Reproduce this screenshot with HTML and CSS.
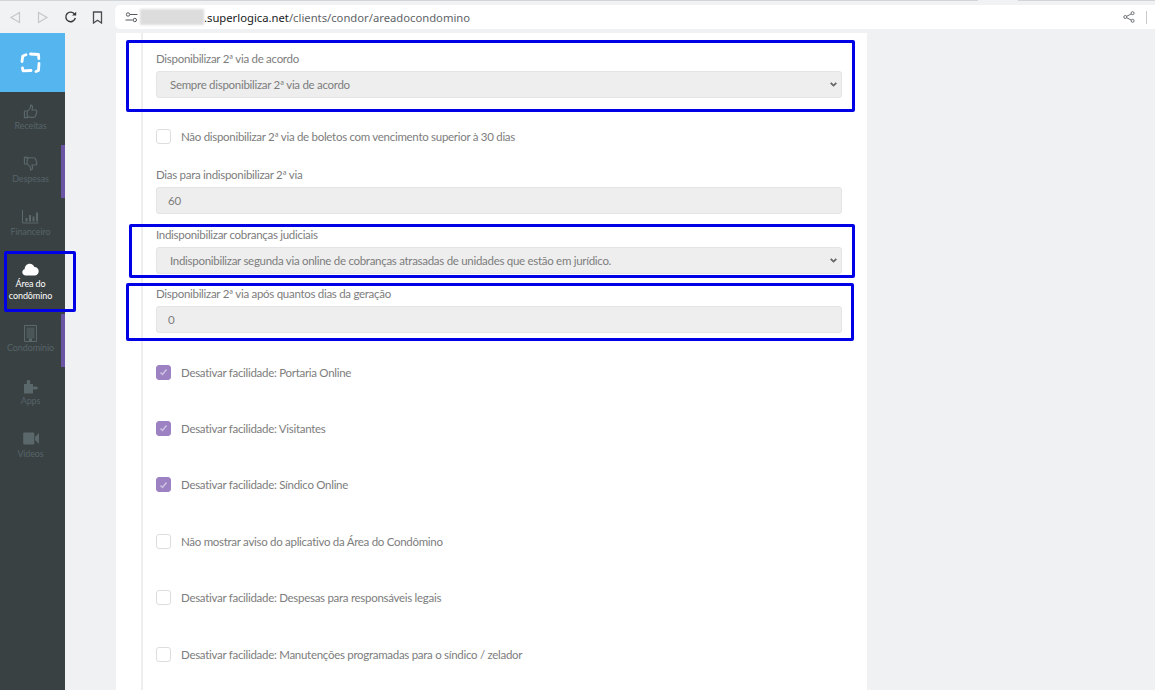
FILE: index.html
```html
<!DOCTYPE html>
<html>
<head>
    <title>Área do condômino</title>
    <link rel="stylesheet" href="styles.css">
</head>
<body>
    <div class="tabs">
        <span class="tab-line grow"></span>
        <span class="tab-gap"></span>
        <span class="tab-line end"></span>
    </div>

    <div class="toolbar">
        <div class="nav-btns">
            <svg class="nav-icon" width="12" height="13" viewBox="0 0 12 13"><path d="M10.5 1.5v10L2 6.5z" fill="none" stroke="#c4c7ca" stroke-width="1.2"/></svg>
            <svg class="nav-icon fwd" width="12" height="13" viewBox="0 0 12 13"><path d="M1.5 1.5v10L10 6.5z" fill="none" stroke="#c4c7ca" stroke-width="1.2"/></svg>
            <svg class="nav-icon" width="13" height="13" viewBox="0 0 13 13"><path d="M10.6 3.2A4.8 4.8 0 1 0 11.3 7" fill="none" stroke="#33373a" stroke-width="1.4"/><path d="M8 4.6h4.2V.8z" fill="#33373a"/></svg>
            <svg class="nav-icon" width="11" height="13" viewBox="0 0 11 13"><path d="M1.5 1h8v11L5.5 9.2 1.5 12z" fill="none" stroke="#4a4e52" stroke-width="1.3"/></svg>
        </div>
        <div class="address-bar">
            <svg class="tune-icon" width="13" height="11" viewBox="0 0 13 11"><g fill="none" stroke="#55595d" stroke-width="1"><circle cx="3" cy="2.5" r="1.7"/><path d="M5 2.5h7.5M.5 8h7"/><circle cx="9.8" cy="8" r="1.7"/></g></svg>
            <span class="url-blur"></span>
            <span class="url"><span class="url-host">.superlogica.net</span>/clients/condor/areadocondomino</span>
            <svg class="share-icon" width="12" height="12" viewBox="0 0 12 12"><g fill="none" stroke="#6a6e72" stroke-width="1"><circle cx="2.3" cy="6" r="1.5"/><circle cx="9.6" cy="2.2" r="1.5"/><circle cx="9.6" cy="9.8" r="1.5"/><path d="M3.7 5.3l4.6-2.4M3.7 6.7l4.6 2.4"/></g></svg>
            <span class="toolbar-sep"></span>
        </div>
    </div>

    <div class="page">
        <div class="sidebar">
            <div class="logo">
                <svg width="23" height="23" viewBox="0 0 23 23">
                    <g fill="none" stroke="#fff" stroke-width="2.800" stroke-linecap="round" stroke-linejoin="round">
                        <path d="M3 10.500 3.800 5 7 3.800"/>
                        <path d="M11.500 3 19.500 3.500 19.800 7.500"/>
                        <path d="M20 12.500 19.500 19.500 17 20.500"/>
                        <path d="M12 19.500 4 19.800 3.500 17"/>
                    </g>
                </svg>
            </div>
            <a class="side-item">
                <span class="side-icon"><svg width="15" height="15" viewBox="0 0 16 16"><path d="M1.500 7.500h3v7h-3zM4.500 8 8 3.800V1.200c1.600 0 2.200 1 2.200 2.400L9.600 6.400h4.200c1.200 0 1.200 1.700.5 2.100.6.600.5 1.600-.3 2 .3.800 0 1.600-.7 1.800.1 1-.5 1.900-1.500 1.900H8c-1.300 0-2.200-.7-3.500-.9" fill="none" stroke="#5a686c" stroke-width="1.200"/></svg></span>
                <span>Receitas</span>
            </a>
            <a class="side-item marked">
                <span class="side-icon"><svg width="15" height="15" viewBox="0 0 16 16"><path d="M1.500 8.500h3v-7h-3zM4.500 8 8 12.200v2.600c1.600 0 2.200-1 2.200-2.400L9.600 9.600h4.200c1.200 0 1.200-1.700.5-2.100.6-.6.5-1.600-.3-2 .3-.8 0-1.600-.7-1.800.1-1-.5-1.900-1.500-1.900H8c-1.300 0-2.200.7-3.500.9" fill="none" stroke="#5a686c" stroke-width="1.200"/></svg></span>
                <span>Despesas</span>
            </a>
            <a class="side-item">
                <span class="side-icon"><svg width="17" height="15" viewBox="0 0 17 15"><path d="M.5 1v13h16" fill="none" stroke="#5a686c"/><path d="M3.500 9h2v3.500h-2zM7 6h2v6.500H7zM10.500 7.500h2v5h-2zM14 3.500h2v9h-2z" fill="#5a686c"/></svg></span>
                <span>Financeiro</span>
            </a>
            <a class="side-item active">
                <span class="side-icon"><svg width="17" height="13" viewBox="0 0 17 13"><path d="M4 12.500C1.800 12.500.3 11 .3 9.200.3 7.600 1.400 6.500 2.600 6.200 2.800 3 5 .8 7.800.8c2.200 0 3.900 1.300 4.600 3.200 2.300-.1 4.300 1.800 4.300 4.300 0 2.400-1.800 4.200-4.100 4.200z" fill="#fff"/></svg></span>
                <span>Área do<br>condômino</span>
            </a>
            <a class="side-item marked">
                <span class="side-icon"><svg width="13" height="17" viewBox="0 0 13 17"><path d="M.5.500h12v16H.5z" fill="none" stroke="#5a686c"/><path d="M2.500 2.500h8v11h-8z" fill="#5a686c" opacity=".55"/><path d="M5 13.500h3v3H5z" fill="#5a686c"/></svg></span>
                <span>Condomínio</span>
            </a>
            <a class="side-item">
                <span class="side-icon"><svg width="16" height="15" viewBox="0 0 16 15"><path d="M1 5h3.200C3.400 3.800 3.400 1 5.500 1s2.100 2.800 1.300 4H10v3c1.200-.9 4.800-.9 4.800 1s-3.600 1.900-4.800 1v4.500H1z" fill="#5a686c"/></svg></span>
                <span>Apps</span>
            </a>
            <a class="side-item">
                <span class="side-icon"><svg width="16" height="13" viewBox="0 0 16 13"><path d="M1.500.500h8.500c.8 0 1.300.5 1.300 1.300v9.400c0 .8-.5 1.300-1.300 1.300H1.500C.7 12.500.2 12 .2 11.200V1.800C.2 1 .7.500 1.500.5zM12 5l4-4v11l-4-4z" fill="#5a686c"/></svg></span>
                <span>Vídeos</span>
            </a>
        </div>

        <div class="content">
            <div class="card">
                <form class="form-list">
                    <div class="field first">
                        <label>Disponibilizar 2ª via de acordo</label>
                        <select class="control" disabled>
                            <option>Sempre disponibilizar 2ª via de acordo</option>
                        </select>
                    </div>

                    <div class="check-row first-check">
                        <span class="check"></span>
                        <span>Não disponibilizar 2ª via de boletos com vencimento superior à 30 dias</span>
                    </div>

                    <div class="field days">
                        <label>Dias para indisponibilizar 2ª via</label>
                        <input class="control" type="text" value="60" disabled>
                    </div>

                    <div class="field judicial">
                        <label>Indisponibilizar cobranças judiciais</label>
                        <select class="control" disabled>
                            <option>Indisponibilizar segunda via online de cobranças atrasadas de unidades que estão em jurídico.</option>
                        </select>
                    </div>

                    <div class="field after">
                        <label>Disponibilizar 2ª via após quantos dias da geração</label>
                        <input class="control" type="text" value="0" disabled>
                    </div>

                    <div class="check-list">
                        <div class="check-row">
                            <span class="check checked"><svg width="9" height="8" viewBox="0 0 9 8"><path d="M1.500 4.500 3.500 6.500 7.500 1.500" fill="none" stroke="#cfc2e2" stroke-width="1.500"/></svg></span>
                            <span>Desativar facilidade: Portaria Online</span>
                        </div>
                        <div class="check-row">
                            <span class="check checked"><svg width="9" height="8" viewBox="0 0 9 8"><path d="M1.500 4.500 3.500 6.500 7.500 1.500" fill="none" stroke="#cfc2e2" stroke-width="1.500"/></svg></span>
                            <span>Desativar facilidade: Visitantes</span>
                        </div>
                        <div class="check-row">
                            <span class="check checked"><svg width="9" height="8" viewBox="0 0 9 8"><path d="M1.500 4.500 3.500 6.500 7.500 1.500" fill="none" stroke="#cfc2e2" stroke-width="1.500"/></svg></span>
                            <span>Desativar facilidade: Síndico Online</span>
                        </div>
                        <div class="check-row">
                            <span class="check"></span>
                            <span>Não mostrar aviso do aplicativo da Área do Condômino</span>
                        </div>
                        <div class="check-row">
                            <span class="check"></span>
                            <span>Desativar facilidade: Despesas para responsáveis legais</span>
                        </div>
                        <div class="check-row">
                            <span class="check"></span>
                            <span>Desativar facilidade: Manutenções programadas para o síndico / zelador</span>
                        </div>
                    </div>
                </form>
            </div>
        </div>
    </div>

    <!-- blue boxes drawn over the screenshot -->
    <div class="mark mark-1"></div>
    <div class="mark mark-2"></div>
    <div class="mark mark-3"></div>
    <div class="mark mark-4"></div>
</body>
</html>
```

FILE: styles.css
```css
* {
    box-sizing: border-box;
}

html, body {
    height: 100%;
}

body {
    margin: 0;
    overflow: hidden;
    background-color: #f0f1f3;
    font-family: "Lato", sans-serif;
    font-size: 11.5px;
    letter-spacing: -0.29px;
    color: #7d7d7d;
}

/* browser chrome */
.tabs {
    display: flex;
    height: 5px;
    background-color: #f1f2f4;
}

.tab-line {
    height: 1px;
    background-color: #d2d5d8;
}

.tab-line.grow {
    width: 978px;
}

.tab-gap {
    width: 40px;
}

.tab-line.end {
    flex: 1;
}

.toolbar {
    display: flex;
    height: 24px;
    background-color: #f1f2f4;
}

.nav-btns {
    display: flex;
    align-items: center;
    gap: 15px;
    width: 115px;
    padding-left: 9px;
}

.nav-icon {
    flex: none;
}

.nav-icon.fwd {
    margin-left: 1px;
}

.address-bar {
    flex: 1;
    display: flex;
    align-items: center;
    background-color: #fff;
    border-radius: 5px 0 0 5px;
    padding-left: 10px;
}

.url-blur {
    width: 64px;
    height: 16px;
    margin-left: 2px;
    background-color: #dcdcdc;
    filter: blur(1px);
}

.url {
    flex: 1;
    font-family: "Noto Sans", sans-serif;
    font-size: 11.25px;
    letter-spacing: 0;
    color: #5f6368;
    white-space: nowrap;
}

.url-host {
    color: #202124;
}

.share-icon {
    margin-right: 11px;
}

.toolbar-sep {
    width: 1px;
    height: 13px;
    margin-right: 8px;
    background-color: #c8cacc;
}

/* page */
.page {
    display: flex;
    margin-top: 4px;
    height: 657px;
}

.sidebar {
    width: 65px;
    flex: none;
    background-color: #3a4142;
}

.logo {
    display: flex;
    align-items: center;
    justify-content: center;
    height: 59px;
    padding-right: 4px;
    background-color: #55b5ee;
}

.side-item {
    display: flex;
    flex-direction: column;
    align-items: center;
    height: 52.75px;
    padding-top: 10px;
    border-right: 4px solid transparent;
    font-size: 9px;
    letter-spacing: -0.1px;
    line-height: 12px;
    color: #55636a;
    text-align: center;
}

.side-item.marked {
    border-right-color: #6a55a5;
}

.side-item.active {
    height: 64px;
    color: #fff;
}

.side-icon {
    display: flex;
    align-items: center;
    justify-content: center;
    height: 18px;
}

.content {
    flex: 1;
    padding-left: 51px;
}

.card {
    width: 751px;
    height: 100%;
    padding: 0 25px;
    background-color: #fff;
}

.form-list {
    height: 100%;
    padding-left: 13px;
    border-left: 2px solid #eee;
}

.field label {
    display: block;
    line-height: 16px;
    margin-bottom: 4px;
}

.field.first {
    padding-top: 18px;
}

.field.days {
    margin-top: 23px;
}

.field.judicial {
    margin-top: 13px;
}

.field.after {
    margin-top: 12px;
}

.control {
    display: block;
    width: 100%;
    height: 27px;
    padding: 0 11px;
    border: 1px solid #e4e4e4;
    border-radius: 3px;
    background-color: #eee;
    font-family: "Lato", sans-serif;
    font-size: 11.5px;
    letter-spacing: -0.29px;
    color: #7d7d7d;
    opacity: 1;
}

select.control {
    appearance: none;
    padding-left: 13px;
    background-image: url("data:image/svg+xml,%3Csvg xmlns='http://www.w3.org/2000/svg' width='7' height='5'%3E%3Cpath d='M.7.8 3.500 3.600 6.300.8' fill='none' stroke='%23666' stroke-width='1.800'/%3E%3C/svg%3E");
    background-repeat: no-repeat;
    background-position: right 4px center;
}

.check-row {
    display: flex;
    align-items: center;
    gap: 10px;
    height: 15px;
    white-space: nowrap;
}

.first-check {
    margin-top: 31px;
}

.check-list {
    display: flex;
    flex-direction: column;
    gap: 41.4px;
    margin-top: 31.6px;
}

.check {
    display: flex;
    align-items: center;
    justify-content: center;
    flex: none;
    width: 15px;
    height: 15px;
    border: 1px solid #ddd;
    border-radius: 3px;
    background-color: #fff;
}

.check.checked {
    border-color: #9c82c2;
    background-color: #9c82c2;
}

/* annotation boxes */
.mark {
    position: absolute;
    border: 3px solid #0000e6;
    border-radius: 2px;
}

.mark-1 {
    left: 126px;
    top: 40px;
    width: 729px;
    height: 72px;
}

.mark-2 {
    left: 129px;
    top: 224px;
    width: 726px;
    height: 54px;
}

.mark-3 {
    left: 126px;
    top: 283px;
    width: 728px;
    height: 58px;
}

.mark-4 {
    left: 4px;
    top: 251px;
    width: 72px;
    height: 61px;
}
```
